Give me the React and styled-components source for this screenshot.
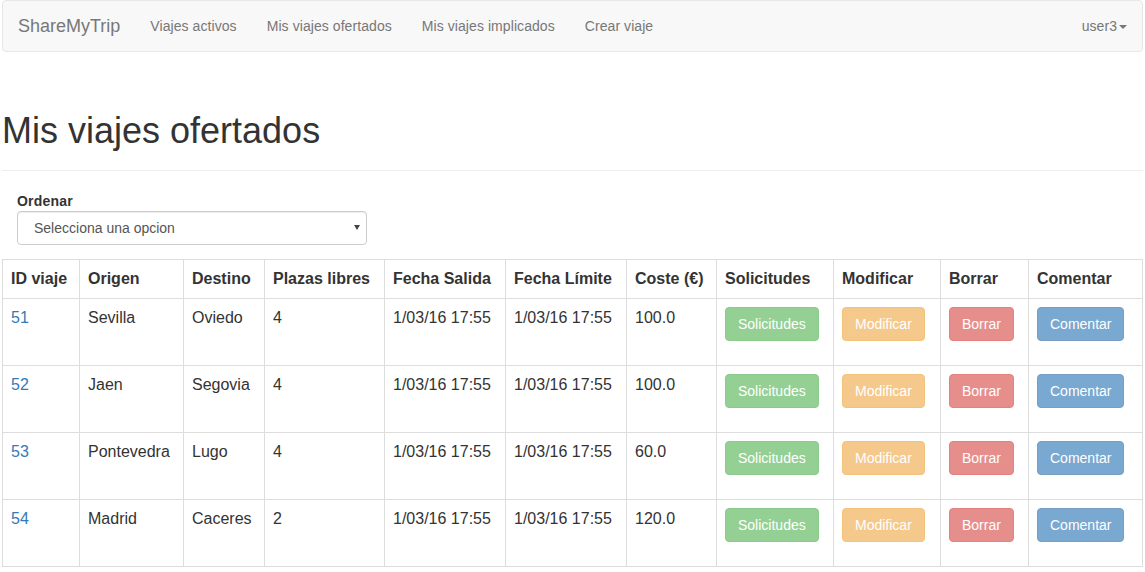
import React from "react";
import styled, { createGlobalStyle } from "styled-components";

const Global = createGlobalStyle`
  * { box-sizing: border-box; }
  html, body { margin: 0; padding: 0; background: #fff; }
  body {
    font-family: "Liberation Sans", Arial, sans-serif;
    font-size: 14px;
    line-height: 1.42857;
    color: #333;
  }
`;

const Page = styled.div`
  padding: 0 2px;
`;

const Navbar = styled.nav`
  display: flex;
  align-items: stretch;
  min-height: 50px;
  background: #f8f8f8;
  border: 1px solid #e7e7e7;
  border-radius: 4px;
`;

const Brand = styled.a`
  padding: 15px 15px;
  font-size: 18px;
  line-height: 20px;
  height: 50px;
  color: #777;
  text-decoration: none;
`;

const NavLink = styled.a`
  padding: 15px;
  line-height: 20px;
  color: #777;
  text-decoration: none;
  letter-spacing: 0.07px;
  display: flex;
  align-items: center;
`;

const NavRight = styled.div`
  margin-left: auto;
  display: flex;
`;

const Caret = styled.span`
  display: inline-block;
  width: 0;
  height: 0;
  margin-left: 2px;
  border-top: 4px solid #777;
  border-left: 4px solid transparent;
  border-right: 4px solid transparent;
  margin-top: 2px;
`;

const PageHeader = styled.div`
  margin: 59px 0 20px;
  padding-bottom: 9px;
  border-bottom: 1px solid #eee;
`;

const Title = styled.h1`
  margin: 0 0 10px;
  font-size: 36px;
  font-weight: 500;
  line-height: 1.1;
  color: #333;
`;

const FilterForm = styled.div`
  padding: 0 15px;
  margin-bottom: 14px;
`;

const Label = styled.label`
  display: block;
  font-weight: bold;
  font-size: 14px;
  letter-spacing: 0.2px;
  line-height: 20px;
`;

const SelectWrap = styled.div`
  position: relative;
  width: 350px;
`;

const Select = styled.select`
  appearance: none;
  -webkit-appearance: none;
  width: 100%;
  height: 34px;
  padding: 6px 24px 6px 16px;
  font-family: inherit;
  font-size: 14px;
  color: #555;
  background: #fff;
  border: 1px solid #ccc;
  border-radius: 4px;
  box-shadow: inset 0 1px 1px rgba(0, 0, 0, 0.075);
`;

const SelectArrow = styled.span`
  position: absolute;
  right: 7px;
  top: 14px;
  width: 0;
  height: 0;
  border-top: 5px solid #444;
  border-left: 3px solid transparent;
  border-right: 3px solid transparent;
  pointer-events: none;
`;

const Table = styled.table`
  width: 1140px;
  border-collapse: collapse;
  table-layout: fixed;
  border: 1px solid #ddd;
`;

const Th = styled.th`
  text-align: left;
  padding: 8px;
  line-height: 22px;
  border: 1px solid #ddd;
  font-weight: bold;
  font-size: 16px;
  white-space: nowrap;
`;

const Td = styled.td`
  padding: 8px;
  line-height: 22px;
  vertical-align: top;
  border: 1px solid #ddd;
  font-size: 16px;
  white-space: nowrap;
`;

const IdLink = styled.a`
  color: #337ab7;
  text-decoration: none;
`;

const colors = {
  success: ["#5cb85c", "#4cae4c"],
  warning: ["#f0ad4e", "#eea236"],
  danger: ["#d9534f", "#d43f3a"],
  primary: ["#337ab7", "#2e6da4"],
};

const Btn = styled.button`
  display: block;
  margin-bottom: 16px;
  padding: 6px 12px;
  height: 34px;
  font-family: inherit;
  font-size: 14px;
  line-height: 20px;
  color: #fff;
  background: ${(p) => colors[p.$kind][0]};
  border: 1px solid ${(p) => colors[p.$kind][1]};
  border-radius: 4px;
  opacity: 0.65;
  cursor: not-allowed;
`;

const widths = [77, 104, 81, 120, 121, 121, 90, 117, 107, 88, 114];
const headers = [
  "ID viaje",
  "Origen",
  "Destino",
  "Plazas libres",
  "Fecha Salida",
  "Fecha Límite",
  "Coste (€)",
  "Solicitudes",
  "Modificar",
  "Borrar",
  "Comentar",
];

const rows = [
  ["51", "Sevilla", "Oviedo", "4", "100.0"],
  ["52", "Jaen", "Segovia", "4", "100.0"],
  ["53", "Pontevedra", "Lugo", "4", "60.0"],
  ["54", "Madrid", "Caceres", "2", "120.0"],
];

export default function App() {
  return (
    <>
      <Global />
      <Page>
        <Navbar>
          <Brand href="#">ShareMyTrip</Brand>
          <NavLink href="#">Viajes activos</NavLink>
          <NavLink href="#">Mis viajes ofertados</NavLink>
          <NavLink href="#">Mis viajes implicados</NavLink>
          <NavLink href="#">Crear viaje</NavLink>
          <NavRight>
            <NavLink href="#">
              user3
              <Caret />
            </NavLink>
          </NavRight>
        </Navbar>
        <PageHeader>
          <Title>Mis viajes ofertados</Title>
        </PageHeader>
        <FilterForm>
          <Label>Ordenar</Label>
          <SelectWrap>
            <Select defaultValue="">
              <option value="">Selecciona una opcion</option>
            </Select>
            <SelectArrow />
          </SelectWrap>
        </FilterForm>
        <Table>
          <colgroup>
            {widths.map((w, i) => (
              <col key={i} style={{ width: w }} />
            ))}
          </colgroup>
          <thead>
            <tr>
              {headers.map((h) => (
                <Th key={h}>{h}</Th>
              ))}
            </tr>
          </thead>
          <tbody>
            {rows.map(([id, o, d, p, c]) => (
              <tr key={id}>
                <Td>
                  <IdLink href="#">{id}</IdLink>
                </Td>
                <Td>{o}</Td>
                <Td>{d}</Td>
                <Td>{p}</Td>
                <Td>1/03/16 17:55</Td>
                <Td>1/03/16 17:55</Td>
                <Td>{c}</Td>
                <Td>
                  <Btn $kind="success">Solicitudes</Btn>
                </Td>
                <Td>
                  <Btn $kind="warning">Modificar</Btn>
                </Td>
                <Td>
                  <Btn $kind="danger">Borrar</Btn>
                </Td>
                <Td>
                  <Btn $kind="primary">Comentar</Btn>
                </Td>
              </tr>
            ))}
          </tbody>
        </Table>
      </Page>
    </>
  );
}
